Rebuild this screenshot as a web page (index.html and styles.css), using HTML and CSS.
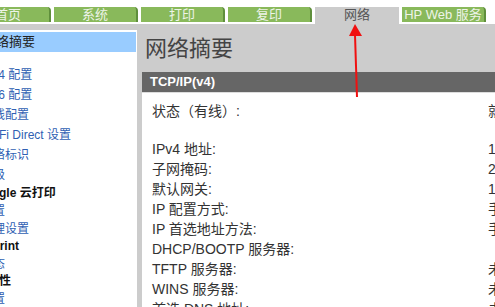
FILE: index.html
```html
<!DOCTYPE html>
<html lang="zh-CN">
<head>
    <meta charset="UTF-8">
    <title>网络摘要</title>
    <link rel="stylesheet" href="styles.css">
</head>
<body>
    <div class="page">
        <ul class="tabs">
            <li class="tab">首页</li>
            <li class="tab">系统</li>
            <li class="tab">打印</li>
            <li class="tab">复印</li>
            <li class="tab active">网络</li>
            <li class="tab">HP Web 服务</li>
        </ul>

        <div class="workspace">
            <!-- Left navigation -->
            <div class="sidebar">
                <div class="nav-current">网络摘要</div>
                <div class="nav-group">
                    <a class="nav-link" href="#">IPv4 配置</a>
                    <a class="nav-link" href="#">IPv6 配置</a>
                    <a class="nav-link" href="#">无线配置</a>
                    <a class="nav-link" href="#">Wi-Fi Direct 设置</a>
                    <a class="nav-link" href="#">网络标识</a>
                    <a class="nav-link" href="#">高级</a>
                </div>
                <div class="nav-head">Google 云打印</div>
                <a class="nav-sub" href="#">设置</a>
                <a class="nav-sub" href="#">代理设置</a>
                <div class="nav-head">AirPrint</div>
                <a class="nav-sub" href="#">状态</a>
                <div class="nav-head">安全性</div>
                <a class="nav-sub" href="#">设置</a>
            </div>

            <!-- Summary -->
            <div class="main">
                <h1 class="page-title">网络摘要</h1>
                <div class="section-bar">TCP/IP(v4)</div>
                <div class="summary">
                    <div class="row"><span class="label">状态（有线）:</span><span class="value">就绪</span></div>
                    <div class="spacer"></div>
                    <div class="row"><span class="label">IPv4 地址:</span><span class="value">192.168.1.105</span></div>
                    <div class="row"><span class="label">子网掩码:</span><span class="value">255.255.255.0</span></div>
                    <div class="row"><span class="label">默认网关:</span><span class="value">192.168.1.1</span></div>
                    <div class="row"><span class="label">IP 配置方式:</span><span class="value">手动</span></div>
                    <div class="row"><span class="label">IP 首选地址方法:</span><span class="value">手动</span></div>
                    <div class="row"><span class="label">DHCP/BOOTP 服务器:</span><span class="value"></span></div>
                    <div class="row"><span class="label">TFTP 服务器:</span><span class="value">未指定</span></div>
                    <div class="row"><span class="label">WINS 服务器:</span><span class="value">未指定</span></div>
                    <div class="row"><span class="label">首选 DNS 地址:</span><span class="value">未指定</span></div>
                </div>
            </div>
        </div>
    </div>

    <!-- annotation arrow pointing at the 网络 tab -->
    <svg class="arrow" width="22" height="80" viewBox="0 0 22 80">
        <polygon points="10,4 4,16 17,16" fill="#f01010"/>
        <line x1="10" y1="15" x2="12" y2="77" stroke="#f01010" stroke-width="2"/>
    </svg>
</body>
</html>
```

FILE: styles.css
```css
html, body {
    margin: 0;
    overflow: hidden;
}
body {
    font-family: "Liberation Sans", "Noto Sans CJK SC", sans-serif;
    background: #fff;
    color: #333;
}
.page {
    margin-left: -33px;
    width: 528px;
}
.tabs {
    display: flex;
    gap: 3px;
    margin: 0;
    padding: 7px 0 0;
    list-style: none;
    align-items: flex-start;
}
.tab {
    box-sizing: border-box;
    width: 84px;
    height: 15px;
    margin-bottom: 2px;
    background: #89b95b;
    border-right: 2px solid #5f8f3c;
    border-top-right-radius: 4px;
    color: #eef4e8;
    font-size: 13px;
    line-height: 15px;
    text-align: center;
}
.tab.active {
    height: 17px;
    margin-bottom: 0;
    background: #cccccc;
    border-right: none;
    border-radius: 0;
    color: #555;
}
.workspace {
    display: flex;
    background: #cccccc;
    min-height: 290px;
}
.sidebar {
    box-sizing: border-box;
    width: 170px;
    flex: none;
    margin-top: 6px;
    padding: 2px 1px 0 0;
    background: #fff;
}
.nav-current {
    height: 20px;
    line-height: 20px;
    padding-left: 16px;
    background: #99ccff;
    color: #222;
    font-size: 13px;
}
.nav-group {
    margin-top: 13px;
}
.nav-link,
.nav-sub {
    display: block;
    padding-left: 14px;
    color: #2f5fb3;
    font-size: 12px;
    text-decoration: none;
    white-space: nowrap;
}
.nav-link {
    height: 20px;
    line-height: 20px;
}
.nav-sub {
    height: 18px;
    line-height: 18px;
}
.nav-head {
    height: 17px;
    line-height: 17px;
    padding-left: 8px;
    color: #111;
    font-size: 12px;
    font-weight: bold;
    white-space: nowrap;
}
.main {
    flex: 1;
    min-width: 0;
    padding: 10px 0 0 5px;
}
.page-title {
    margin: 0 0 8px;
    padding-left: 3px;
    font-size: 22px;
    font-weight: normal;
    line-height: 30px;
    color: #444;
}
.section-bar {
    height: 20px;
    line-height: 20px;
    padding-left: 8px;
    background: #666666;
    border-bottom: 1px solid #dddddd;
    color: #fff;
    font-size: 13px;
    font-weight: bold;
}
.summary {
    background: #fff;
    padding: 8px 0 10px 10px;
}
.row {
    display: flex;
    height: 20px;
    line-height: 20px;
    font-size: 14px;
    white-space: nowrap;
}
.label {
    width: 336px;
    flex: none;
}
.spacer {
    height: 18px;
}
.arrow {
    position: absolute;
    left: 345px;
    top: 20px;
}
```
